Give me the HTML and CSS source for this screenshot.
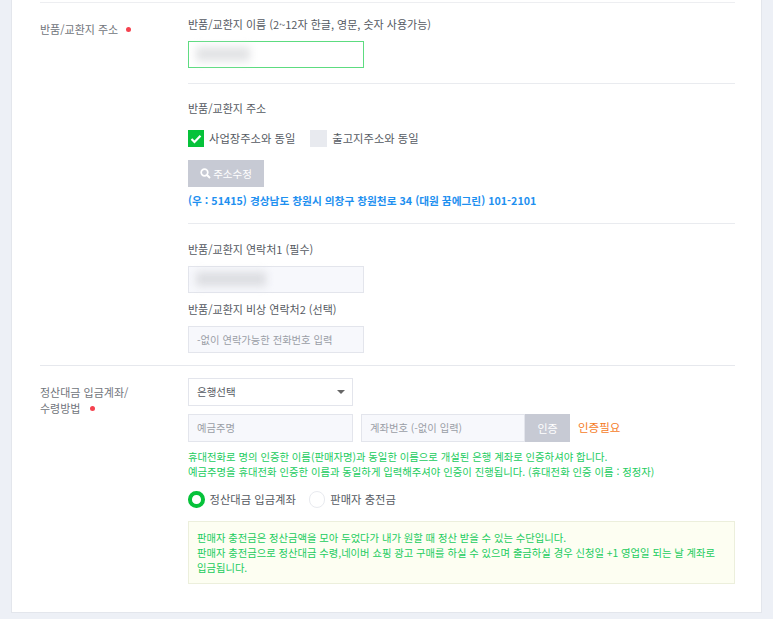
FILE: index.html
```html
<!DOCTYPE html>
<html lang="ko">

<head>
   <meta charset="UTF-8">
   <meta name="viewport" content="width=device-width, initial-scale=1.0">
   <title>반품/교환지 주소</title>
   <link rel="stylesheet" href="styles.css">
</head>

<body>
   <div class="panel">
       <!-- 반품/교환지 -->
       <div class="row row-return">
           <div class="row-label">반품/교환지 주소<span class="dot"></span></div>
           <div class="row-body">
               <div class="group group-name">
                   <p class="field-title">반품/교환지 이름 (2~12자 한글, 영문, 숫자 사용가능)</p>
                   <div class="input input-ok"><span class="smudge smudge-name"></span></div>
               </div>

               <div class="group group-address">
                   <p class="field-title">반품/교환지 주소</p>
                   <div class="checks">
                       <div class="check-item">
                           <span class="check check-on">
                               <svg width="12" height="10" viewBox="0 0 12 10"><path d="M1.5 5l3 3 6-6.2" fill="none" stroke="#fff" stroke-width="2.2"/></svg>
                           </span>
                           사업장주소와 동일
                       </div>
                       <div class="check-item">
                           <span class="check check-off"></span>
                           출고지주소와 동일
                       </div>
                   </div>
                   <button class="btn-address" type="button">
                       <svg width="11" height="11" viewBox="0 0 11 11"><circle cx="4.5" cy="4.5" r="3.3" fill="none" stroke="#fff" stroke-width="1.7"/><path d="M7 7l3 3" stroke="#fff" stroke-width="2"/></svg>
                       주소수정
                   </button>
                   <p class="address-text">(우 : 51415) 경상남도 창원시 의창구 창원천로 34 (대원 꿈에그린) 101-2101</p>
               </div>

               <div class="group group-phone">
                   <p class="field-title">반품/교환지 연락처1 (필수)</p>
                   <div class="input"><span class="smudge smudge-phone"></span></div>
                   <p class="field-title field-title-next">반품/교환지 비상 연락처2 (선택)</p>
                   <div class="input placeholder">-없이 연락가능한 전화번호 입력</div>
               </div>
           </div>
       </div>

       <!-- 정산대금 -->
       <div class="row row-account">
           <div class="row-label">정산대금 입금계좌/<br>수령방법<span class="dot"></span></div>
           <div class="row-body">
               <div class="select">은행선택<span class="caret"></span></div>
               <div class="account-line">
                   <div class="input input-holder placeholder">예금주명</div>
                   <div class="input input-number placeholder">계좌번호 (-없이 입력)</div>
                   <button class="btn-verify" type="button">인증</button>
                   <span class="verify-state">인증필요</span>
               </div>
               <p class="notice">휴대전화로 명의 인증한 이름(판매자명)과 동일한 이름으로 개설된 은행 계좌로 인증하셔야 합니다.<br>예금주명을 휴대전화 인증한 이름과 동일하게 입력해주셔야 인증이 진행됩니다. (휴대전화 인증 이름 : 정정자)</p>
               <div class="radios">
                   <div class="radio-item"><span class="radio radio-on"></span>정산대금 입금계좌</div>
                   <div class="radio-item"><span class="radio"></span>판매자 충전금</div>
               </div>
               <div class="info-box">판매자 충전금은 정산금액을 모아 두었다가 내가 원할 때 정산 받을 수 있는 수단입니다.<br>판매자 충전금으로 정산대금 수령,네이버 쇼핑 광고 구매를 하실 수 있으며 출금하실 경우 신청일 +1 영업일 되는 날 계좌로 입금됩니다.</div>
           </div>
       </div>
   </div>
</body>

</html>
```

FILE: styles.css
```css
* {
    box-sizing: border-box;
}

body {
    font-family: "Noto Sans CJK KR", "Noto Sans", sans-serif;
    font-size: 11px;
    color: #555a62;
    margin: 0;
    height: 619px;
    overflow: hidden;
    background-color: #edf0f6;
}

p {
    margin: 0;
}

.panel {
    width: 751px;
    height: 613px;
    margin-left: 11px;
    padding: 2px 26px 0 28px;
    background-color: #fff;
    border: 1px solid #e3e6ec;
    border-top: none;
}

.row {
    display: flex;
    border-top: 1px solid #edeef1;
}

.row-return {
    height: 363px;
}

.row-account {
    border-top-color: #e6e8ed;
    padding-top: 12px;
}

.row-label {
    width: 148px;
    flex-shrink: 0;
    color: #70747b;
    line-height: 16px;
}

.row-return .row-label {
    padding-top: 18px;
}

.row-account .row-label {
    padding-top: 6px;
}

.dot {
    display: inline-block;
    width: 5px;
    height: 5px;
    margin-left: 8px;
    border-radius: 50%;
    background-color: #f5424f;
    vertical-align: 2px;
}

.row-account .dot {
    margin-left: 10px;
}

.row-body {
    flex: 1;
    min-width: 0;
}

.field-title {
    line-height: 16px;
}

.group {
    border-bottom: 1px solid #e9ebef;
}

.group-name {
    height: 81px;
    padding-top: 13px;
}

.group-address {
    height: 140px;
    padding-top: 16px;
}

.group-phone {
    border-bottom: none;
    padding-top: 17px;
}

.input {
    width: 176px;
    height: 27px;
    padding: 0 8px;
    font-size: 10.3px;
    line-height: 25px;
    background-color: #f7f8fc;
    border: 1px solid #e3e5ec;
}

.group .input {
    margin-top: 9px;
}

.field-title-next {
    margin-top: 8px;
}

.input-ok {
    background-color: #fff;
    border-color: #5ddc80;
}

.placeholder {
    color: #9a9ea6;
}

.smudge {
    display: block;
    height: 14px;
    margin: 5px 0 0 -1px;
    background-color: #dcdde1;
    filter: blur(4px);
}

.smudge-name {
    width: 54px;
    background-color: #e2e3e5;
}

.smudge-phone {
    width: 70px;
}

.checks {
    display: flex;
    gap: 15px;
    margin-top: 14px;
}

.check-item {
    display: flex;
    align-items: center;
    gap: 5px;
    font-size: 11.3px;
    line-height: 17px;
}

.check {
    display: flex;
    align-items: center;
    justify-content: center;
    width: 16px;
    height: 17px;
    background-color: #e8eaef;
}

.check-off {
    width: 17px;
}

.check-on {
    background-color: #06c23a;
}

.btn-address {
    display: flex;
    align-items: center;
    justify-content: center;
    gap: 2px;
    width: 76px;
    height: 27px;
    margin-top: 13px;
    padding: 0;
    color: #fff;
    font: inherit;
    font-size: 10.5px;
    background-color: #c7cad4;
    border: none;
}

.address-text {
    margin-top: 5px;
    color: #1e90f0;
    font-size: 10.7px;
    font-weight: 700;
    line-height: 17px;
}

.select {
    display: flex;
    align-items: center;
    justify-content: space-between;
    width: 165px;
    height: 28px;
    padding: 0 7px 2px 8px;
    color: #555a62;
    font-size: 10.5px;
    border: 1px solid #e3e5ec;
}

.caret {
    width: 0;
    height: 0;
    margin-top: 2px;
    border-left: 4.5px solid transparent;
    border-right: 4.5px solid transparent;
    border-top: 4.5px solid #666;
}

.account-line {
    display: flex;
    align-items: center;
    margin-top: 8px;
}

.input-holder {
    width: 165px;
    height: 28px;
    margin-right: 8px;
}

.input-number {
    width: 164px;
    height: 28px;
}

.btn-verify {
    width: 45px;
    height: 28px;
    padding: 0;
    color: #fff;
    font: inherit;
    background-color: #c7cad4;
    border: none;
}

.verify-state {
    margin: 0 0 3px 8px;
    color: #f57c1f;
    font-size: 11.5px;
}

.notice {
    margin-top: 7px;
    color: #22cc5e;
    font-size: 10.35px;
    line-height: 15px;
}

.radios {
    display: flex;
    gap: 13px;
    margin-top: 12px;
}

.radio-item {
    display: flex;
    align-items: center;
    gap: 5px;
    font-size: 11.3px;
    line-height: 17px;
}

.radio {
    width: 16.5px;
    height: 16.5px;
    background-color: #fff;
    border: 1px solid #e8eaef;
    border-radius: 50%;
}

.radio-on {
    border: 4.5px solid #06c23a;
}

.info-box {
    margin-top: 13px;
    padding: 8px 15px 7px 8px;
    height: 63px;
    color: #22cc5e;
    font-size: 10.3px;
    line-height: 15px;
    background-color: #fdfef2;
    border: 1px solid #ecefdc;
}
```
